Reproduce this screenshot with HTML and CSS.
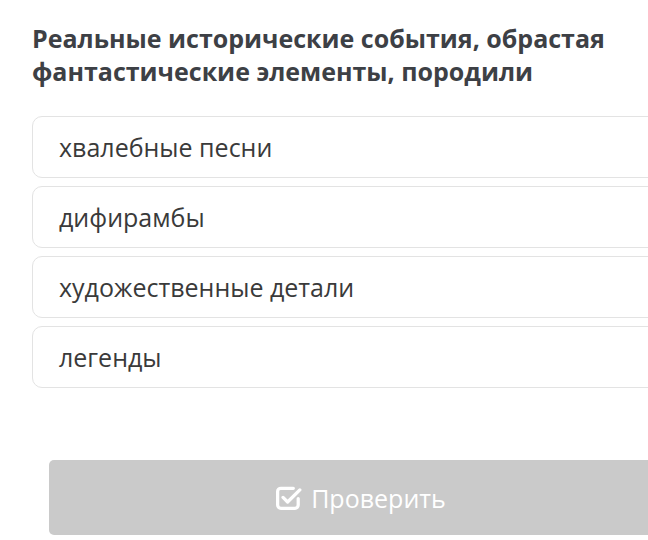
FILE: index.html
```html
<!DOCTYPE html>
<html lang="ru">
<head>
    <meta charset="UTF-8">
    <meta name="viewport" content="width=device-width, initial-scale=1.0">
    <title>Тест</title>
    <link rel="stylesheet" href="styles.css">
</head>
<body>
    <div class="quiz">
        <h2 class="question">Реальные исторические события, обрастая фантастические элементы, породили</h2>
        <ul class="answers">
            <li class="answer">хвалебные песни</li>
            <li class="answer">дифирамбы</li>
            <li class="answer">художественные детали</li>
            <li class="answer">легенды</li>
        </ul>
        <button class="check-btn" disabled>
            <svg class="check-icon" width="26" height="26" viewBox="0 0 24 24" fill="none" stroke="#fff" stroke-width="3" stroke-linecap="round" stroke-linejoin="round">
                <path d="M20.5 12.5v6a3 3 0 0 1-3 3H4.5a3 3 0 0 1-3-3V6a3 3 0 0 1 3-3H16"/>
                <path d="M6.5 11.5l4.2 4.2L22 4.5"/>
            </svg>
            Проверить
        </button>
    </div>
</body>
</html>
```

FILE: styles.css
```css
body {
    margin: 0;
    background-color: #fff;
    font-family: "Open Sans", "Noto Sans", sans-serif;
    overflow: hidden;
}
.quiz {
    width: 680px;
    padding: 22px 0 0 32px;
}
.question {
    margin: 0;
    width: 600px;
    font-size: 25px;
    font-weight: 700;
    line-height: 33px;
    color: #3d4045;
}
.answers {
    list-style: none;
    margin: 28px 0 0;
    padding: 0;
    display: flex;
    flex-direction: column;
    gap: 8px;
}
.answer {
    height: 60px;
    display: flex;
    align-items: center;
    padding-left: 26px;
    border: 1px solid #e3e3e3;
    border-radius: 10px;
    font-size: 25px;
    color: #3a3a3a;
}
.check-btn {
    margin: 72px 0 0 17px;
    width: 624px;
    height: 75px;
    display: flex;
    align-items: center;
    justify-content: center;
    gap: 9px;
    border: none;
    border-radius: 5px;
    background-color: #cacaca;
    color: #fff;
    font-family: inherit;
    font-size: 25px;
}
```
